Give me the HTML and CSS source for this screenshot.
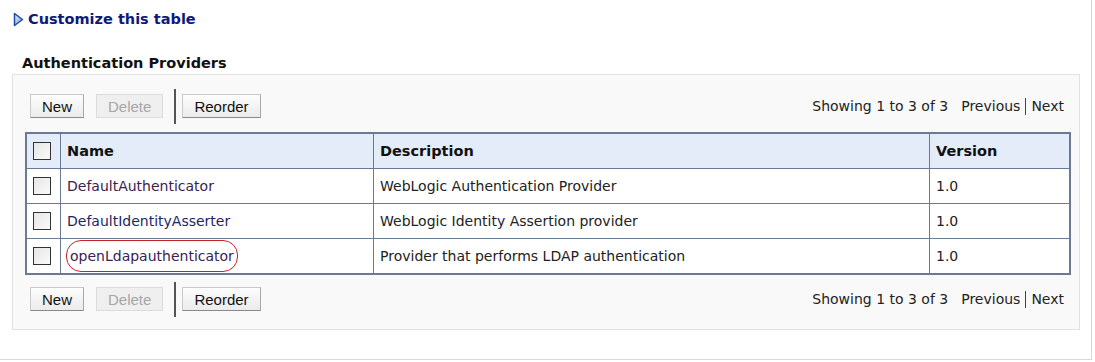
FILE: index.html
```html
<!DOCTYPE html>
<html lang="en">
<head>
    <meta charset="UTF-8">
    <title>Authentication Providers</title>
    <link rel="stylesheet" href="styles.css">
</head>
<body>
    <div class="page">
        <a class="customize" href="#">
            <svg class="arrow" width="11" height="15" viewBox="0 0 11 15">
                <defs>
                    <linearGradient id="arrowFill" x1="0" y1="0" x2="1" y2="1">
                        <stop offset="0" stop-color="#e6f0fc"/>
                        <stop offset="1" stop-color="#6f9be0"/>
                    </linearGradient>
                </defs>
                <path d="M1.5 1.5 L9.5 7.5 L1.5 13.5 Z" fill="url(#arrowFill)" stroke="#1f4aa8" stroke-width="1.5" stroke-linejoin="round"/>
            </svg>
            Customize this table
        </a>
        <h2 class="section_title">Authentication Providers</h2>
        <div class="panel">
            <div class="toolbar">
                <button type="button" class="btn">New</button>
                <button type="button" class="btn btn_disabled">Delete</button>
                <span class="separator"></span>
                <button type="button" class="btn">Reorder</button>
                <div class="pager">
                    <span>Showing 1 to 3 of 3</span>
                    <span class="pager_links">Previous <span class="bar"></span> Next</span>
                </div>
            </div>
            <table class="grid">
                <thead>
                    <tr>
                        <th class="col_check"><span class="check"></span></th>
                        <th class="col_name">Name</th>
                        <th class="col_desc">Description</th>
                        <th class="col_ver">Version</th>
                    </tr>
                </thead>
                <tbody>
                    <tr>
                        <td class="col_check"><span class="check"></span></td>
                        <td><a href="#" class="link visited">DefaultAuthenticator</a></td>
                        <td>WebLogic Authentication Provider</td>
                        <td>1.0</td>
                    </tr>
                    <tr>
                        <td class="col_check"><span class="check"></span></td>
                        <td><a href="#" class="link">DefaultIdentityAsserter</a></td>
                        <td>WebLogic Identity Assertion provider</td>
                        <td>1.0</td>
                    </tr>
                    <tr>
                        <td class="col_check"><span class="check"></span></td>
                        <td class="cell_marked"><a href="#" class="link visited marked">openLdapauthenticator</a></td>
                        <td>Provider that performs LDAP authentication</td>
                        <td>1.0</td>
                    </tr>
                </tbody>
            </table>
            <div class="toolbar toolbar_bottom">
                <button type="button" class="btn">New</button>
                <button type="button" class="btn btn_disabled">Delete</button>
                <span class="separator"></span>
                <button type="button" class="btn">Reorder</button>
                <div class="pager">
                    <span>Showing 1 to 3 of 3</span>
                    <span class="pager_links">Previous <span class="bar"></span> Next</span>
                </div>
            </div>
        </div>
    </div>
</body>
</html>
```

FILE: styles.css
```css
body {
    margin: 0;
    background: #fff;
    font-family: "DejaVu Sans", sans-serif;
    font-size: 13px;
    color: #222;
}

.page {
    width: 1091px;
    height: 359px;
    border-right: 1px solid #d8d8d8;
    border-bottom: 1px solid #d8d8d8;
}

.customize {
    display: flex;
    align-items: center;
    gap: 4px;
    padding: 10px 0 0 13px;
    height: 18px;
    font-size: 14.5px;
    font-weight: bold;
    color: #0d1a7a;
    text-decoration: none;
}

.arrow {
    flex: none;
}

.section_title {
    margin: 26px 0 0 22px;
    height: 18px;
    font-size: 14.5px;
    line-height: 18px;
    font-weight: bold;
    color: #111;
}

.panel {
    width: 1068px;
    height: 256px;
    margin: 2px 0 0 12px;
    padding: 13px 10px 0 12px;
    box-sizing: border-box;
    border: 1px solid #e2e2e2;
    background: #f9f9f9;
}

.toolbar {
    display: flex;
    align-items: center;
    height: 36px;
    padding-left: 5px;
}

.toolbar_bottom {
    margin-top: 6px;
}

.btn {
    height: 24px;
    margin-right: 12px;
    padding: 0 11px;
    border: 1px solid #c9c9c9;
    border-bottom-color: #8a8a8a;
    border-right-color: #a8a8a8;
    background: linear-gradient(#fdfdfd, #ebebeb);
    font-family: "Liberation Sans", Arial, sans-serif;
    font-size: 15px;
    color: #111;
}

.btn_disabled {
    margin-right: 11px;
    border-color: #dcdcdc;
    background: #efefef;
    color: #a6a6a6;
}

.separator {
    width: 2px;
    height: 35px;
    margin-right: 6px;
    background: #555;
}

.pager {
    display: flex;
    align-items: center;
    gap: 13px;
    margin-left: auto;
    margin-right: 5px;
    font-size: 14px;
    color: #222;
}

.pager_links {
    display: flex;
    align-items: center;
    gap: 5px;
}

.bar {
    width: 1px;
    height: 17px;
    background: #444;
}

.grid {
    width: 1046px;
    margin-top: 8px;
    border-collapse: collapse;
    border: 2px solid #6b7a93;
    background: #fff;
}

.grid th,
.grid td {
    border: 1px solid #6b7a93;
    padding: 0 6px;
    text-align: left;
}

.grid th {
    height: 34px;
    background: #e3ecf8;
    font-size: 14.5px;
    font-weight: bold;
    color: #111;
}

.grid td {
    height: 34px;
    font-size: 14px;
    color: #222;
}

.col_check {
    width: 21px;
}

.col_name {
    width: 300px;
}

.col_desc {
    width: 543px;
}

.check {
    display: block;
    width: 16px;
    height: 16px;
    border: 1px solid #333;
    background: linear-gradient(135deg, #e6e6e6, #fafafa);
}

.link {
    color: #1a2766;
    text-decoration: none;
}

.visited {
    color: #3a2250;
}

.cell_marked {
    padding-left: 2px;
}

.marked {
    display: inline-block;
    margin-left: -1px;
    padding: 7px 3px;
    border: 1.5px solid #c8202a;
    border-radius: 15px;
}
```
